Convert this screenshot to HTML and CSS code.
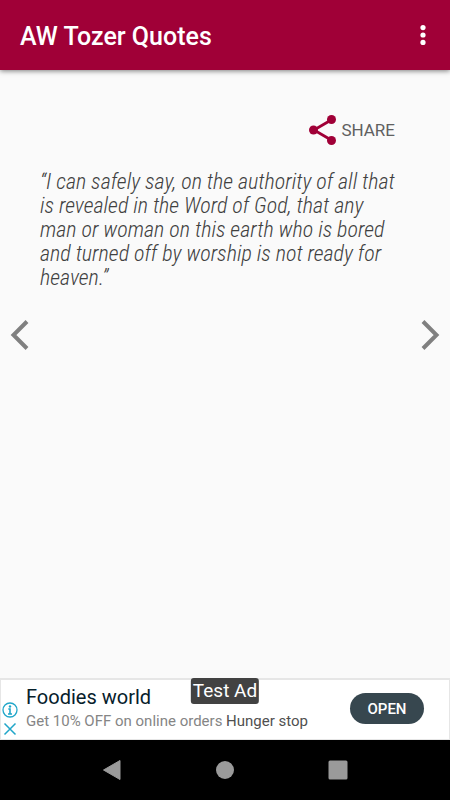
FILE: index.html
```html
<!DOCTYPE html>
<html lang="en">
<head>
<meta charset="utf-8">
<meta name="viewport" content="width=device-width, initial-scale=1">
<title>AW Tozer Quotes</title>
<link rel="stylesheet" href="styles.css">
</head>
<body>
<header class="app-bar">
  <h1 class="title">AW Tozer Quotes</h1>
  <button class="menu" type="button" aria-label="More options">
    <svg width="6" height="20" viewBox="0 0 6 20" fill="#fff"><circle cx="3" cy="2.600" r="2.600"/><circle cx="3" cy="10" r="2.600"/><circle cx="3" cy="17.400" r="2.600"/></svg>
  </button>
</header>
<main class="page">
  <button class="share" type="button">
    <svg width="28" height="30" viewBox="0 0 28 30" fill="#a00037"><path d="M23 4.500 5 15l18 10.500" fill="none" stroke="#a00037" stroke-width="2.800"/><circle cx="22.500" cy="4.500" r="4.500"/><circle cx="4.500" cy="15" r="4.500"/><circle cx="22.500" cy="25.500" r="4.500"/></svg>
    <span>SHARE</span>
  </button>
  <blockquote class="quote">“I can safely say, on the authority of all that<br>is revealed in the Word of God, that any<br>man or woman on this earth who is bored<br>and turned off by worship is not ready for<br>heaven.”</blockquote>
  <nav class="pager">
    <button type="button" aria-label="Previous quote"><svg width="20" height="32" viewBox="0 0 20 32"><path d="M17 2.500 3.500 16 17 29.500" fill="none" stroke="#808080" stroke-width="4"/></svg></button>
    <button type="button" aria-label="Next quote"><svg width="20" height="32" viewBox="0 0 20 32"><path d="M3 2.500 16.500 16 3 29.500" fill="none" stroke="#808080" stroke-width="4"/></svg></button>
  </nav>
</main>
<aside class="ad">
  <span class="ad-tag">Test Ad</span>
  <div class="ad-controls">
    <button type="button" aria-label="About this ad"><svg width="16" height="16" viewBox="0 0 16 16"><circle cx="8" cy="8" r="7" fill="none" stroke="#20a6c9" stroke-width="1.300"/><circle cx="8" cy="4.500" r="1.200" fill="#20a6c9"/><path d="M6.300 7H8v4.800M6 12h4" fill="none" stroke="#20a6c9" stroke-width="1.600"/></svg></button>
    <button type="button" aria-label="Close ad"><svg width="16" height="16" viewBox="0 0 16 16"><path d="m2.500 2.500 11 11m0-11-11 11" fill="none" stroke="#20a6c9" stroke-width="1.500"/></svg></button>
  </div>
  <div class="ad-copy">
    <a class="ad-title" href="#">Foodies world</a>
    <p class="ad-text">Get 10% OFF on online orders <span>Hunger stop</span></p>
  </div>
  <button class="ad-open" type="button">OPEN</button>
</aside>
<nav class="system-bar">
  <button type="button" aria-label="Back"><svg width="20" height="22" viewBox="0 0 20 22"><path d="M18 1.500v19L1.500 11z" fill="#9a9a9a" stroke="#9a9a9a" stroke-linejoin="round"/></svg></button>
  <button type="button" aria-label="Home"><svg width="20" height="20" viewBox="0 0 20 20"><circle cx="10" cy="10" r="9" fill="#9a9a9a"/></svg></button>
  <button type="button" aria-label="Recent apps"><svg width="20" height="20" viewBox="0 0 20 20"><rect x="0.500" y="0.500" width="19" height="19" rx="1.500" fill="#9a9a9a"/></svg></button>
</nav>
</body>
</html>
```
FILE: styles.css
```css
* { box-sizing: border-box; }
body {
  margin: 0;
  min-height: 100vh;
  display: flex;
  flex-direction: column;
  background: #fafafa;
  color: #606060;
  font-family: Roboto, "Liberation Sans", sans-serif;
}
button {
  margin: 0;
  padding: 0;
  border: 0;
  background: none;
  color: inherit;
  font: inherit;
}
svg { display: block; }
.app-bar {
  display: flex;
  align-items: center;
  justify-content: space-between;
  height: 70px;
  padding: 0 24px 0 20px;
  background: #a00037;
  box-shadow: 0 1px 5px rgba(0, 0, 0, .5);
}
.title {
  margin: 0;
  padding-top: 4px;
  color: #fff;
  font-size: 25px;
  line-height: 32px;
  font-weight: 500;
}
.page {
  flex: 1;
  display: flex;
  flex-direction: column;
  padding-top: 45px;
}
.share {
  display: flex;
  align-items: center;
  align-self: flex-end;
  gap: 4px;
  margin-right: 55px;
  font-size: 17px;
  line-height: 30px;
}
.quote {
  margin: 25px 40px 23px;
  color: #404040;
  font-family: "Roboto Condensed", Roboto, sans-serif;
  font-size: 22px;
  font-weight: 300;
  line-height: 24px;
  font-style: italic;
  white-space: nowrap;
}
.pager {
  display: flex;
  justify-content: space-between;
  padding: 6px 10px;
}
.ad {
  position: relative;
  display: flex;
  align-items: center;
  height: 62px;
  padding-right: 25px;
  border: 2px solid #e6e6e6;
  border-width: 2px 1px 1px;
  background: #fff;
}
.ad-tag {
  position: absolute;
  top: -2px;
  left: 50%;
  transform: translateX(-50%);
  padding: 0 2px;
  border-radius: 3px;
  background: #424242;
  color: #fff;
  font-size: 19px;
  line-height: 26px;
  white-space: nowrap;
}
.ad-controls {
  display: flex;
  flex-direction: column;
  align-self: flex-end;
  gap: 3px;
  width: 25px;
  padding: 0 0 2px 1px;
}
.ad-copy {
  flex: 1;
  padding-bottom: 4px;
  white-space: nowrap;
}
.ad-title {
  display: block;
  color: #06202b;
  font-size: 20px;
  line-height: 26px;
  text-decoration: none;
}
.ad-text {
  margin: 0;
  color: #858585;
  font-size: 15px;
  line-height: 22px;
}
.ad-text span { color: #505050; }
.ad-open {
  width: 74px;
  height: 31px;
  margin-bottom: 2px;
  border-radius: 16px;
  background: #37474f;
  color: #fff;
  font-size: 15px;
  font-weight: 500;
}
.system-bar {
  display: flex;
  align-items: center;
  justify-content: space-around;
  height: 60px;
  padding: 0 55px;
  background: #000;
}
```
